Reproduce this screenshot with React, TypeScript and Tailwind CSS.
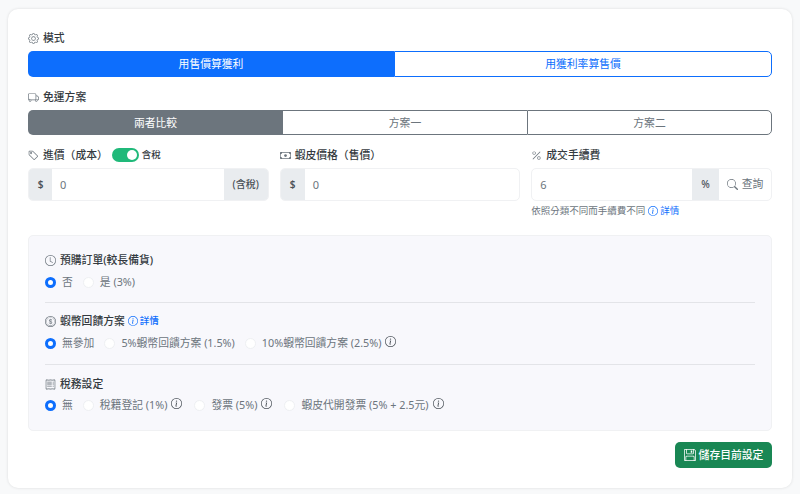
import type { ReactNode } from "react";
import {
  BsCash,
  BsClock,
  BsCoin,
  BsFloppy,
  BsGear,
  BsInfoCircle,
  BsPercent,
  BsReceipt,
  BsSearch,
  BsTag,
  BsTruck,
} from "react-icons/bs";

function Label({ icon, children }: { icon: ReactNode; children: ReactNode }) {
  return (
    <div className="flex h-[14px] items-center gap-[4px] text-[10.8px] leading-[14px] font-medium text-[#343a40]">
      <span className="text-[11px] text-[#6c757d]">{icon}</span>
      {children}
    </div>
  );
}

function Radio({ label, checked, info }: { label: string; checked?: boolean; info?: boolean }) {
  return (
    <div className="flex items-center gap-[6px] text-[10.8px] leading-[14px] text-[#6c757d]">
      {checked ? (
        <span className="h-[11px] w-[11px] rounded-full border-[3px] border-[#0d6efd] bg-white" />
      ) : (
        <span className="h-[11px] w-[11px] rounded-full border border-[#eef0f3] bg-white" />
      )}
      <span>{label}</span>
      {info ? <BsInfoCircle className="-mt-[3px] mr-[2px] -ml-[2px] text-[11px] text-[#495057]" /> : null}
    </div>
  );
}

function Addon({ children, className }: { children: ReactNode; className?: string }) {
  return (
    <div className={`flex items-center justify-center bg-[#e9ecef] text-[10px] font-medium text-[#495057] ${className ?? ""}`}>
      {children}
    </div>
  );
}

export default function App() {
  return (
    <div
      className="h-[494px] w-[800px] overflow-hidden bg-[#f8f9fa] px-[8px] pt-[9px]"
      style={{ fontFamily: '"Noto Sans", "Noto Sans CJK TC", sans-serif' }}
    >
      <div className="h-[479px] rounded-[10px] bg-white px-[20px] pt-[22px] shadow-[0_0_3px_rgba(0,0,0,0.12)]">
        {/* 模式 */}
        <Label icon={<BsGear />}>模式</Label>
        <div className="mt-[6px] flex h-[26px] text-[10.8px] leading-none">
          <div className="flex w-[366px] items-center justify-center rounded-l-[5px] bg-[#0d6efd] pt-px text-white">
            用售價算獲利
          </div>
          <div className="flex flex-1 items-center justify-center rounded-r-[5px] border border-[#0d6efd] pt-px text-[#0d6efd]">
            用獲利率算售價
          </div>
        </div>

        {/* 免運方案 */}
        <div className="mt-[13px]">
          <Label icon={<BsTruck />}>免運方案</Label>
        </div>
        <div className="mt-[6px] flex h-[25px] text-[10.8px] leading-none text-[#6c757d]">
          <div className="flex w-[255px] items-center justify-center rounded-l-[5px] bg-[#6c757d] pt-px text-white">
            兩者比較
          </div>
          <div className="flex w-[244px] items-center justify-center border-y border-[#6c757d] pt-px">方案一</div>
          <div className="flex flex-1 items-center justify-center rounded-r-[5px] border border-[#6c757d] pt-px">方案二</div>
        </div>

        {/* 價格欄位 */}
        <div className="mt-[13px] grid grid-cols-3 gap-[11px]">
          <div>
            <div className="flex h-[14px] items-center gap-[4px]">
              <Label icon={<BsTag />}>進價（成本）</Label>
              <div className="flex h-[14px] w-[27px] items-center justify-end rounded-full bg-[#20b97a] pr-[2px]">
                <span className="h-[10px] w-[10px] rounded-full bg-white" />
              </div>
              <span className="-ml-[1px] text-[9.5px] font-medium text-[#343a40]">含稅</span>
            </div>
            <div className="mt-[6px] flex h-[33px] overflow-hidden rounded-[5px] border border-[#f0f1f3]">
              <Addon className="w-[23px] font-semibold">$</Addon>
              <div className="flex flex-1 items-center pt-px pl-[8px] text-[11px] text-[#6c757d]">0</div>
              <Addon className="w-[44px]">(含稅)</Addon>
            </div>
          </div>
          <div>
            <Label icon={<BsCash />}>蝦皮價格（售價）</Label>
            <div className="mt-[6px] flex h-[33px] overflow-hidden rounded-[5px] border border-[#f0f1f3]">
              <Addon className="w-[24px] font-semibold">$</Addon>
              <div className="flex flex-1 items-center pt-px pl-[8px] text-[11px] text-[#6c757d]">0</div>
            </div>
          </div>
          <div>
            <Label icon={<BsPercent />}>成交手續費</Label>
            <div className="mt-[6px] flex h-[33px] overflow-hidden rounded-[5px] border border-[#f0f1f3]">
              <div className="flex flex-1 items-center pt-px pl-[8px] text-[11px] text-[#6c757d]">6</div>
              <Addon className="w-[27px]">%</Addon>
              <div className="flex w-[52px] items-center justify-center gap-[4px] text-[10.8px] text-[#6c757d]">
                <BsSearch className="text-[11px]" />
                查詢
              </div>
            </div>
            <div className="mt-[4px] flex items-center gap-[3px] text-[9.5px] leading-[12px] text-[#6c757d]">
              依照分類不同而手續費不同
              <span className="flex items-center gap-[2px] text-[#0d6efd]">
                <BsInfoCircle className="text-[10px]" />
                詳情
              </span>
            </div>
          </div>
        </div>

        {/* 進階設定 */}
        <div className="mt-[18px] h-[196px] rounded-[5px] border border-[#f0f1f3] bg-[#f8f8fc] px-[16px] pt-[17px]">
          <Label icon={<BsClock />}>預購訂單(較長備貨)</Label>
          <div className="mt-[8px] flex gap-[10px]">
            <Radio label="否" checked />
            <Radio label="是 (3%)" />
          </div>
          <div className="mt-[13px] h-px bg-[#e3e4e8]" />
          <div className="mt-[11px] flex h-[14px] items-center gap-[3px]">
            <Label icon={<BsCoin />}>蝦幣回饋方案</Label>
            <span className="flex items-center gap-[2px] text-[9.5px] font-medium text-[#0d6efd]">
              <BsInfoCircle className="text-[10px]" />
              詳情
            </span>
          </div>
          <div className="mt-[8px] flex gap-[10px]">
            <Radio label="無參加" checked />
            <Radio label="5%蝦幣回饋方案 (1.5%)" />
            <Radio label="10%蝦幣回饋方案 (2.5%)" info />
          </div>
          <div className="mt-[14px] h-px bg-[#e3e4e8]" />
          <div className="mt-[12px]">
            <Label icon={<BsReceipt />}>稅務設定</Label>
          </div>
          <div className="mt-[7px] flex gap-[10px]">
            <Radio label="無" checked />
            <Radio label="稅籍登記 (1%)" info />
            <Radio label="發票 (5%)" info />
            <Radio label="蝦皮代開發票 (5% + 2.5元)" info />
          </div>
        </div>

        <div className="mt-[11px] flex justify-end">
          <div className="flex h-[26px] w-[97px] items-center justify-center gap-[3px] rounded-[5px] bg-[#198754] text-[10.8px] font-medium text-white">
            <BsFloppy className="text-[12px]" />
            儲存目前設定
          </div>
        </div>
      </div>
    </div>
  );
}
